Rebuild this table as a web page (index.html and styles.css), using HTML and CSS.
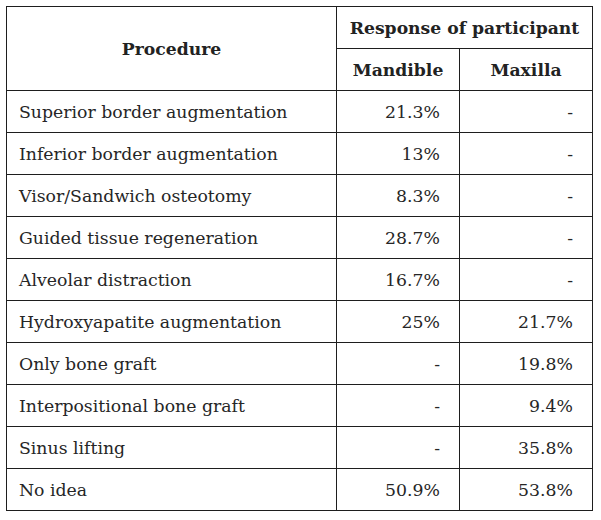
FILE: index.html
```html
<!DOCTYPE html>
<html>
<head>
<meta charset="utf-8">
<link rel="stylesheet" href="styles.css">
</head>
<body>
<table class="data">
  <colgroup>
    <col class="c1"><col class="c2"><col class="c3">
  </colgroup>
  <thead>
    <tr class="h1">
      <th rowspan="2">Procedure</th>
      <th colspan="2">Response of participant</th>
    </tr>
    <tr class="h2">
      <th>Mandible</th>
      <th>Maxilla</th>
    </tr>
  </thead>
  <tbody>
    <tr><td>Superior border augmentation</td><td class="num">21.3%</td><td class="num">-</td></tr>
    <tr><td>Inferior border augmentation</td><td class="num">13%</td><td class="num">-</td></tr>
    <tr><td>Visor/Sandwich osteotomy</td><td class="num">8.3%</td><td class="num">-</td></tr>
    <tr><td>Guided tissue regeneration</td><td class="num">28.7%</td><td class="num">-</td></tr>
    <tr><td>Alveolar distraction</td><td class="num">16.7%</td><td class="num">-</td></tr>
    <tr><td>Hydroxyapatite augmentation</td><td class="num">25%</td><td class="num">21.7%</td></tr>
    <tr><td>Only bone graft</td><td class="num">-</td><td class="num">19.8%</td></tr>
    <tr><td>Interpositional bone graft</td><td class="num">-</td><td class="num">9.4%</td></tr>
    <tr><td>Sinus lifting</td><td class="num">-</td><td class="num">35.8%</td></tr>
    <tr><td>No idea</td><td class="num">50.9%</td><td class="num">53.8%</td></tr>
  </tbody>
</table>
</body>
</html>
```
FILE: styles.css
```css
html, body {
  margin: 0;
  padding: 0;
  background: #ffffff;
}
body {
  padding: 6px 0 0 6px;
  font-family: "DejaVu Serif", serif;
  color: #222222;
}
.data {
  border-collapse: collapse;
  table-layout: fixed;
  width: 586px;
}
.c1 { width: 330px; }
.c2 { width: 123px; }
.c3 { width: 133px; }
.data th, .data td {
  border: 1.5px solid #1e1e1e;
  padding: 0;
}
.data th {
  font-weight: bold;
  font-size: 17.2px;
  text-align: center;
  color: #222;
}
.h1 th { height: 41px; }
.h2 th { height: 41px; }
.data td {
  height: 41px;
  font-size: 17.3px;
  padding-left: 12px;
  color: #262626;
}
.data td.num {
  text-align: right;
  padding-left: 0;
  padding-right: 19px;
}
```
